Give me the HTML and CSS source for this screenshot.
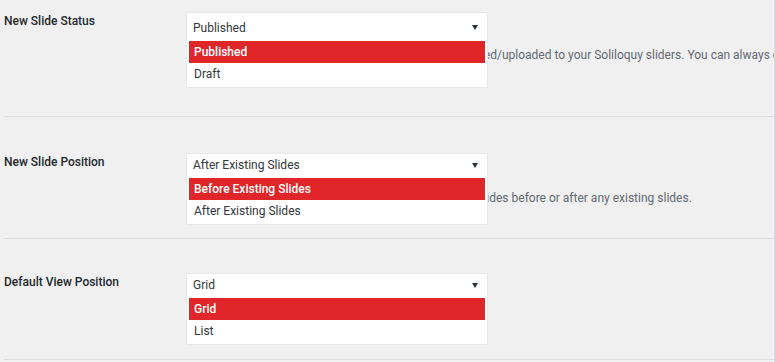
FILE: index.html
```html
<!DOCTYPE html>
<html lang="en">
<head>
<meta charset="utf-8">
<title>Soliloquy Settings</title>
<link rel="stylesheet" href="styles.css">
</head>
<body>
<div class="settings">
  <div class="row row-status">
    <div class="label">New Slide Status</div>
    <div class="field">
      <div class="dropdown dropdown-tall">
        <div class="current"><span>Published</span><svg class="caret" viewBox="0 0 6 5" width="6" height="5"><path d="M0 0H6L3 5Z"/></svg></div>
        <ul class="options">
          <li class="active">Published</li>
          <li>Draft</li>
        </ul>
      </div>
      <p class="desc desc-status">Determines the default status of new slides that are added/uploaded to your Soliloquy sliders. You can always change the status of each slide individually.</p>
    </div>
  </div>
  <div class="row row-position">
    <div class="label">New Slide Position</div>
    <div class="field">
      <div class="dropdown">
        <div class="current"><span>After Existing Slides</span><svg class="caret" viewBox="0 0 6 5" width="6" height="5"><path d="M0 0H6L3 5Z"/></svg></div>
        <ul class="options">
          <li class="active">Before Existing Slides</li>
          <li>After Existing Slides</li>
        </ul>
      </div>
      <p class="desc desc-position">Choose whether uploaded images should be added as slides before or after any existing slides.</p>
    </div>
  </div>
  <div class="row row-view">
    <div class="label">Default View Position</div>
    <div class="field">
      <div class="dropdown">
        <div class="current"><span>Grid</span><svg class="caret" viewBox="0 0 6 5" width="6" height="5"><path d="M0 0H6L3 5Z"/></svg></div>
        <ul class="options">
          <li class="active">Grid</li>
          <li>List</li>
        </ul>
      </div>
    </div>
  </div>
</div>
</body>
</html>
```
FILE: styles.css
```css
* { box-sizing: border-box; }

html, body {
  margin: 0;
  padding: 0;
  background: #f0f0f0;
}

body {
  font-family: "Roboto", "Liberation Sans", sans-serif;
  font-size: 12px;
  color: #32373c;
}

.settings {
  width: 775px;
  height: 362px;
  border-right: 1px solid #dcdcde;
  overflow: hidden;
}

.row {
  display: flex;
  margin-left: 4px;
  border-bottom: 1px solid #dcdcde;
}

.row-status { height: 117px; padding-top: 12px; }
.row-position { height: 122px; padding-top: 36px; }
.row-view { height: 121px; padding-top: 34px; }

.label {
  width: 182px;
  flex: none;
  line-height: 18px;
  font-weight: 500;
  color: #23282d;
}

.field {
  flex: 1;
  min-width: 0;
}

.dropdown {
  position: relative;
  width: 302px;
  background: #fff;
  border: 1px solid #e8e8e8;
  border-bottom: none;
}

.current {
  display: flex;
  align-items: center;
  justify-content: space-between;
  height: 22px;
  padding: 0 9px 0 6px;
  line-height: 22px;
  color: #32373c;
}

.dropdown-tall .current {
  height: 26px;
  padding-top: 3px;
}

.caret {
  display: block;
  fill: #2c3338;
}

.options {
  position: absolute;
  z-index: 1;
  top: 100%;
  left: -1px;
  right: -1px;
  margin: 0;
  padding: 2px 2px 2px;
  list-style: none;
  background: #fff;
  border: 1px solid #e8e8e8;
  border-top: none;
}

.options li {
  height: 22px;
  line-height: 22px;
  padding-left: 5px;
  color: #32373c;
}

.options li.active {
  background: #e1262a;
  color: #fff;
  font-weight: 500;
}

.desc {
  margin: 0;
  white-space: nowrap;
  line-height: 18px;
  color: #646970;
}

.desc-status { margin-top: 7px; }
.desc-position { margin-top: 13px; }
```
